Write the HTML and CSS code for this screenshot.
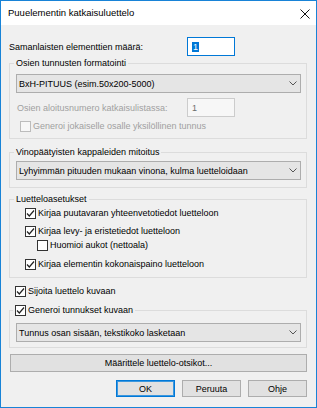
FILE: index.html
```html
<!DOCTYPE html>
<html lang="fi">
<head>
  <meta charset="UTF-8">
  <title>Puuelementin katkaisuluettelo</title>
  <link rel="stylesheet" href="styles.css">
</head>
<body>
  <div class="window">
    <!-- Title bar -->
    <div class="titlebar">
      <span class="title">Puuelementin katkaisuluettelo</span>
      <svg class="close" viewBox="0 0 10 10" width="10" height="10">
        <path d="M0.5 0.5 L9.5 9.5 M9.5 0.5 L0.5 9.5" stroke="#111" stroke-width="1" fill="none" />
      </svg>
    </div>

    <div class="dialog">
      <div class="row row-count">
        <span class="label">Samanlaisten elementtien määrä:</span>
        <div class="input focused"><span class="sel">1</span></div>
      </div>

      <!-- Osien tunnukset -->
      <fieldset class="group group-format">
        <legend>Osien tunnusten formatointi</legend>
        <div class="combo">
          <span>BxH-PITUUS (esim.50x200-5000)</span>
          <svg class="chevron" viewBox="0 0 8 5" width="8" height="5"><polyline points="0.5,0.5 4,4 7.5,0.5" /></svg>
        </div>
        <div class="row row-start disabled">
          <span class="label">Osien aloitusnumero katkaisulistassa:</span>
          <div class="input">1</div>
        </div>
        <div class="check disabled indent-1">
          <span class="box"></span>
          <span>Generoi jokaiselle osalle yksilöllinen tunnus</span>
        </div>
      </fieldset>

      <!-- Vinopäätyiset -->
      <fieldset class="group group-angle">
        <legend>Vinopäätyisten kappaleiden mitoitus</legend>
        <div class="combo">
          <span>Lyhyimmän pituuden mukaan vinona, kulma luetteloidaan</span>
          <svg class="chevron" viewBox="0 0 8 5" width="8" height="5"><polyline points="0.5,0.5 4,4 7.5,0.5" /></svg>
        </div>
      </fieldset>

      <!-- Luetteloasetukset -->
      <fieldset class="group group-list">
        <legend>Luetteloasetukset</legend>
        <div class="check indent-2">
          <span class="box checked"><svg viewBox="0 0 11 11"><polyline points="2,5.5 4.3,8 9,2.5" /></svg></span>
          <span>Kirjaa puutavaran yhteenvetotiedot luetteloon</span>
        </div>
        <div class="check indent-2 gap-4">
          <span class="box checked"><svg viewBox="0 0 11 11"><polyline points="2,5.5 4.3,8 9,2.5" /></svg></span>
          <span>Kirjaa levy- ja eristetiedot luetteloon</span>
        </div>
        <div class="check indent-3">
          <span class="box"></span>
          <span>Huomioi aukot (nettoala)</span>
        </div>
        <div class="check indent-2 gap-5">
          <span class="box checked"><svg viewBox="0 0 11 11"><polyline points="2,5.5 4.3,8 9,2.5" /></svg></span>
          <span>Kirjaa elementin kokonaispaino luetteloon</span>
        </div>
      </fieldset>

      <div class="check place">
        <span class="box checked"><svg viewBox="0 0 11 11"><polyline points="2,5.5 4.3,8 9,2.5" /></svg></span>
        <span>Sijoita luettelo kuvaan</span>
      </div>

      <!-- Tunnukset kuvaan -->
      <fieldset class="group group-ids">
        <legend class="check-legend">
          <span class="check">
            <span class="box checked"><svg viewBox="0 0 11 11"><polyline points="2,5.5 4.3,8 9,2.5" /></svg></span>
            <span>Generoi tunnukset kuvaan</span>
          </span>
        </legend>
        <div class="combo">
          <span>Tunnus osan sisään, tekstikoko lasketaan</span>
          <svg class="chevron" viewBox="0 0 8 5" width="8" height="5"><polyline points="0.5,0.5 4,4 7.5,0.5" /></svg>
        </div>
      </fieldset>

      <button class="btn wide">Määrittele luettelo-otsikot...</button>

      <div class="buttons">
        <button class="btn default">OK</button>
        <button class="btn">Peruuta</button>
        <button class="btn">Ohje</button>
      </div>
    </div>
  </div>
</body>
</html>
```

FILE: styles.css
```css
/* General */
body {
  margin: 0;
  font-family: "Liberation Sans", Arial, sans-serif;
  font-size: 9px;
  line-height: 14px;
  color: #000;
  background: #fff;
}

.window {
  width: 317px;
  height: 408px;
  box-sizing: border-box;
  border: 1px solid #1883d7;
  background: #f0f0f0;
  display: flex;
  flex-direction: column;
}

/* Title bar */
.titlebar {
  height: 24px;
  flex: none;
  background: #fff;
  display: flex;
  align-items: center;
  justify-content: space-between;
  padding: 0 6px 0 7px;
}
.title {
  font-size: 9.5px;
}
.close {
  display: block;
  margin-top: 1px;
}

/* Dialog body */
.dialog {
  padding: 0 9px 0 8px;
  display: flex;
  flex-direction: column;
}

.row {
  display: flex;
  align-items: center;
  height: 19px;
}
.row-count {
  margin-top: 12px;
}
.row-count .label {
  width: 178px;
}
.row-start {
  margin-top: 5px;
}
.row-start .label {
  width: 170px;
  padding-left: 1px;
}

.input {
  width: 48px;
  height: 19px;
  box-sizing: border-box;
  border: 1px solid #cccccc;
  background: #f7f7f7;
  padding-left: 4px;
  display: flex;
  align-items: center;
  color: #6d6d6d;
}
.input.focused {
  border-color: #0078d7;
  background: #fff;
}
.sel {
  background: #0078d7;
  color: #fff;
  line-height: 10px;
  padding: 0 1px;
}

.disabled {
  color: #a0a0a0;
}

/* Group boxes */
.group {
  margin: 0;
  padding: 0 5px 0 6px;
  border: 1px solid #dcdcdc;
  min-width: 0;
}
.group legend {
  padding: 0 2px;
  margin-left: -2px;
  height: 14px;
  line-height: 14px;
}
.group-format {
  padding-top: 4px;
  padding-bottom: 5px;
}
.group-angle {
  margin-top: 6px;
  padding-top: 2px;
  padding-bottom: 7px;
}
.group-list {
  margin-top: 4px;
  padding-bottom: 6px;
}
.group-ids {
  margin-top: 5px;
  padding-top: 6px;
  padding-bottom: 5px;
}
.group-ids .check-legend {
  margin-left: -3px;
}

/* Combo box */
.combo {
  height: 19px;
  box-sizing: border-box;
  border: 1px solid #adadad;
  background: #e5e5e5;
  display: flex;
  align-items: center;
  justify-content: space-between;
  padding: 0 2px 0 2px;
}
.chevron {
  display: block;
  margin-right: 1px;
}
.chevron polyline {
  fill: none;
  stroke: #555;
  stroke-width: 1;
}

/* Checkboxes */
.check {
  display: flex;
  align-items: center;
  gap: 2px;
  height: 14px;
}
.box {
  width: 11px;
  height: 11px;
  box-sizing: border-box;
  border: 1px solid #333;
  background: #fff;
  flex: none;
  display: block;
}
.box svg {
  display: block;
  width: 11px;
  height: 11px;
  margin: -1px 0 0 -1px;
}
.box polyline {
  fill: none;
  stroke: #222;
  stroke-width: 1.2;
}
.check.disabled .box {
  border-color: #bcbcbc;
  background: #f7f7f7;
}
.indent-1 {
  margin-top: 2px;
  margin-left: 4px;
}
.indent-2 {
  margin-left: 9px;
}
.indent-3 {
  margin-left: 21px;
}
.gap-4 {
  margin-top: 4px;
}
.gap-5 {
  margin-top: 5px;
}
.place {
  margin-top: 6px;
  margin-left: 6px;
}

/* Buttons */
.btn {
  font: inherit;
  color: #000;
  background: #e1e1e1;
  border: 1px solid #adadad;
  border-radius: 0;
  padding: 0;
  height: 18px;
  line-height: 14px;
}
.wide {
  margin-top: 6px;
  margin-left: 1px;
  width: 297px;
}
.buttons {
  margin-top: 8px;
  display: flex;
  justify-content: flex-end;
  gap: 7px;
}
.buttons .btn {
  width: 59px;
  height: 17px;
}
.btn.default {
  border-color: #0078d7;
  box-shadow: inset 0 0 0 1px #3c97de;
}
```
